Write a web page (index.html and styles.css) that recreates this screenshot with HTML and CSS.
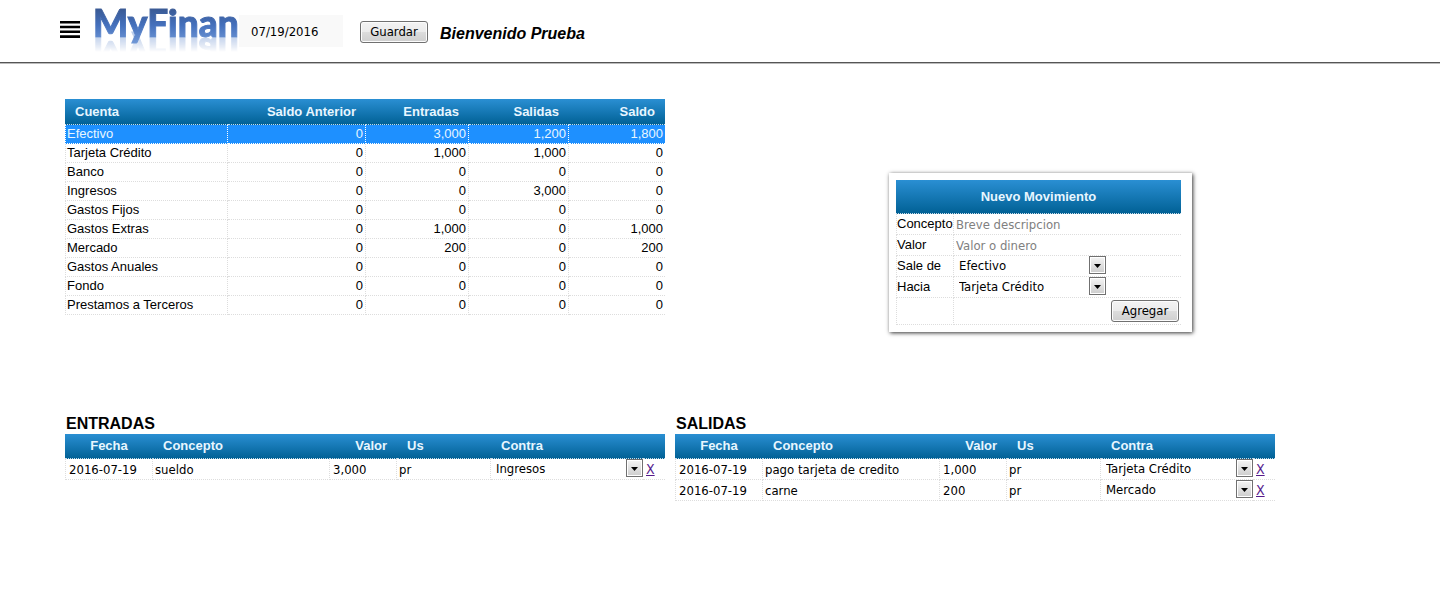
FILE: index.html
```html
<!DOCTYPE html>
<html lang="es">
<head>
<meta charset="utf-8">
<title>MyFinan</title>
<link rel="stylesheet" href="styles.css">
</head>
<body>
<header class="topbar">
  <button class="menu" type="button" aria-label="Menú">
    <svg width="20" height="17" viewBox="0 0 20 17" aria-hidden="true"><path d="M0 0h20v2.6H0zM0 4.8h20v2.5H0zM0 9.6h20v2.5H0zM0 14.3h20v2.7H0z"/></svg>
  </button>
  <div class="logo"><span class="logo-text">MyFinan</span></div>
  <input class="today" type="text" value="07/19/2016" aria-label="Fecha">
  <button class="btn save" type="button">Guardar</button>
  <strong class="welcome">Bienvenido Prueba</strong>
</header>
<main class="content">
  <section class="overview">
    <table class="grid accounts">
      <colgroup><col class="c-name"><col class="c-prev"><col class="c-in"><col class="c-out"><col class="c-total"></colgroup>
      <thead><tr><th>Cuenta</th><th>Saldo Anterior</th><th>Entradas</th><th>Salidas</th><th>Saldo</th></tr></thead>
      <tbody>
        <tr class="selected"><td>Efectivo</td><td>0</td><td>3,000</td><td>1,200</td><td>1,800</td></tr>
        <tr><td>Tarjeta Crédito</td><td>0</td><td>1,000</td><td>1,000</td><td>0</td></tr>
        <tr><td>Banco</td><td>0</td><td>0</td><td>0</td><td>0</td></tr>
        <tr><td>Ingresos</td><td>0</td><td>0</td><td>3,000</td><td>0</td></tr>
        <tr><td>Gastos Fijos</td><td>0</td><td>0</td><td>0</td><td>0</td></tr>
        <tr><td>Gastos Extras</td><td>0</td><td>1,000</td><td>0</td><td>1,000</td></tr>
        <tr><td>Mercado</td><td>0</td><td>200</td><td>0</td><td>200</td></tr>
        <tr><td>Gastos Anuales</td><td>0</td><td>0</td><td>0</td><td>0</td></tr>
        <tr><td>Fondo</td><td>0</td><td>0</td><td>0</td><td>0</td></tr>
        <tr><td>Prestamos a Terceros</td><td>0</td><td>0</td><td>0</td><td>0</td></tr>
      </tbody>
    </table>
    <form class="card">
      <table class="grid entry">
        <colgroup><col class="c-label"><col></colgroup>
        <thead><tr><th colspan="2">Nuevo Movimiento</th></tr></thead>
        <tbody>
          <tr><td><label for="concepto">Concepto</label></td><td><input id="concepto" type="text" placeholder="Breve descripcion"></td></tr>
          <tr><td><label for="valor">Valor</label></td><td><input id="valor" type="text" placeholder="Valor o dinero"></td></tr>
          <tr><td><label for="sale">Sale de</label></td><td><select id="sale"><option>Efectivo</option></select></td></tr>
          <tr><td><label for="hacia">Hacia</label></td><td><select id="hacia"><option>Tarjeta Crédito</option></select></td></tr>
          <tr class="actions"><td></td><td><button class="btn" type="button">Agregar</button></td></tr>
        </tbody>
      </table>
    </form>
  </section>
  <section class="ledgers">
    <div>
      <h2 class="title">ENTRADAS</h2>
      <table class="grid moves">
        <colgroup><col class="c-date"><col><col class="c-value"><col class="c-user"><col class="c-contra"><col class="c-del"></colgroup>
        <thead><tr><th>Fecha</th><th>Concepto</th><th>Valor</th><th>Us</th><th>Contra</th><th></th></tr></thead>
        <tbody>
          <tr><td><input type="text" value="2016-07-19" aria-label="Fecha"></td><td><input type="text" value="sueldo" aria-label="Concepto"></td><td><input type="text" value="3,000" aria-label="Valor"></td><td><input type="text" value="pr" aria-label="Us"></td><td><select aria-label="Contra"><option>Ingresos</option></select></td><td><a class="remove" href="#">X</a></td></tr>
        </tbody>
      </table>
    </div>
    <div>
      <h2 class="title">SALIDAS</h2>
      <table class="grid moves">
        <colgroup><col class="c-date"><col><col class="c-value"><col class="c-user"><col class="c-contra"><col class="c-del"></colgroup>
        <thead><tr><th>Fecha</th><th>Concepto</th><th>Valor</th><th>Us</th><th>Contra</th><th></th></tr></thead>
        <tbody>
          <tr><td><input type="text" value="2016-07-19" aria-label="Fecha"></td><td><input type="text" value="pago tarjeta de credito" aria-label="Concepto"></td><td><input type="text" value="1,000" aria-label="Valor"></td><td><input type="text" value="pr" aria-label="Us"></td><td><select aria-label="Contra"><option>Tarjeta Crédito</option></select></td><td><a class="remove" href="#">X</a></td></tr>
          <tr><td><input type="text" value="2016-07-19" aria-label="Fecha"></td><td><input type="text" value="carne" aria-label="Concepto"></td><td><input type="text" value="200" aria-label="Valor"></td><td><input type="text" value="pr" aria-label="Us"></td><td><select aria-label="Contra"><option>Mercado</option></select></td><td><a class="remove" href="#">X</a></td></tr>
        </tbody>
      </table>
    </div>
  </section>
</main>
</body>
</html>
```
FILE: styles.css
```css
* { box-sizing: border-box; }

body {
  margin: 0;
  background: #fff;
  color: #000;
  font: 13px/16px "Liberation Sans", Arial, sans-serif;
}

input, select, .btn {
  font: 13px/16px "DejaVu Sans Condensed", Tahoma, sans-serif;
  color: #000;
}

/* Top bar */
.topbar {
  display: flex;
  align-items: center;
  height: 63px;
  margin-bottom: 1px;
  padding-left: 60px;
  border-bottom: 1px solid #555;
  box-shadow: 0 1px 0 #bbb;
}

.menu {
  padding: 0;
  border: 0;
  background: none;
  line-height: 0;
  margin-bottom: 4px;
}

.logo {
  width: 147px;
  height: 52px;
  margin: 0 0 8px 12px;
  padding-left: 1px;
  overflow: hidden;
}

.logo-text {
  display: block;
  width: max-content;
  font: 900 37px/44px Lato, Calibri, sans-serif;
  color: transparent;
  -webkit-text-stroke: 1px transparent;
  background: linear-gradient(#3a5a94 8px, #4470bc 24px, #6f97d6 42px);
  background-clip: text;
  -webkit-background-clip: text;
  -webkit-box-reflect: below -15px linear-gradient(transparent 50%, rgba(0, 0, 0, .55));
}

.today {
  width: 104px;
  height: 32px;
  padding: 0 12px;
  border: 0;
  background: #f9f9f9;
}

.btn {
  width: 68px;
  height: 22px;
  padding: 0;
  border: 1px solid #707070;
  border-radius: 3px;
  background: linear-gradient(#f3f3f3, #ebebeb 50%, #dddddd 50%, #cfcfcf);
  box-shadow: inset 0 0 0 1px #fcfcfc;
}

.save { margin: 2px 0 0 17px; }

.welcome {
  margin: 6px 0 0 12px;
  font-size: 16px;
  font-style: italic;
}

/* Page body */
.content {
  max-width: 1275px;
  padding: 35px 0 0 65px;
}

.overview {
  display: flex;
  align-items: flex-start;
  justify-content: space-between;
  padding-right: 83px;
}

.grid {
  width: 100%;
  table-layout: fixed;
  border-collapse: separate;
  border-spacing: 0;
}

.grid thead tr { background: linear-gradient(#2a8fd3, #006094); }

.grid th {
  height: 25px;
  padding: 0 10px;
  border-bottom: 1px dotted #c8dce8;
  color: #e8f6ff;
  font-size: 13px;
  text-align: left;
}

.grid td {
  height: 21px;
  padding: 0;
  border-right: 1px dotted #ddd;
  border-bottom: 1px dotted #ddd;
}

.grid td:first-child { border-left: 1px dotted #ddd; }
.grid td:last-child { border-right: 0; }

/* Accounts */
.accounts { width: 600px; }
.accounts th { height: 26px; }
.accounts td { height: 19px; padding: 0 2px 0 1px; }
.accounts th:not(:first-child), .accounts td:not(:first-child) { text-align: right; }
.accounts .selected td { background: #1e90ff; color: #e8f6ff; border-color: #fff; }
.c-prev { width: 138px; }
.c-in { width: 103px; }
.c-out { width: 100px; }
.c-total { width: 96px; }

/* New movement form */
.card {
  width: 303px;
  margin-top: 74px;
  padding: 7px 11px 7px 7px;
  background: #fff;
  box-shadow: 1px 1px 4px #333;
}

.entry { width: 285px; }
.entry th { height: 34px; text-align: center; }
.c-label { width: 58px; }
.entry .actions td { height: 27px; padding-right: 2px; text-align: right; }

.grid input, .grid select {
  display: block;
  width: 100%;
  height: 20px;
  padding: 0 2px;
  border: 0;
  background: transparent;
}

.grid input::placeholder { color: #808080; opacity: 1; }

.grid select {
  padding: 0 18px 0 5px;
  border-radius: 0;
  appearance: none;
  background: url("data:image/svg+xml,%3Csvg xmlns='http://www.w3.org/2000/svg' width='17' height='18'%3E%3Cdefs%3E%3ClinearGradient id='g' x2='0' y2='1'%3E%3Cstop stop-color='%23f2f2f2'/%3E%3Cstop offset='1' stop-color='%23cfcfcf'/%3E%3C/linearGradient%3E%3C/defs%3E%3Crect x='.5' y='.5' width='16' height='17' fill='%23fff' stroke='%23707070'/%3E%3Crect x='2' y='2' width='13' height='14' fill='url(%23g)'/%3E%3Cpath d='M5 8h7l-3.5 4z'/%3E%3C/svg%3E") no-repeat right top;
}

.entry select { width: 152px; }

/* Entries and withdrawals */
.ledgers {
  display: grid;
  grid-template-columns: 1fr 1fr;
  gap: 10px;
  margin-top: 82px;
}

.title {
  margin: 0;
  padding-left: 1px;
  font-size: 16px;
  line-height: 20px;
}

.moves th:first-child { text-align: center; }
.moves th:nth-child(3) { text-align: right; }
.moves td:first-child input, .moves td:nth-child(3) input { padding-left: 3px; }
.c-date { width: 88px; }
.c-value { width: 67px; }
.c-user { width: 94px; }
.c-contra { width: 152px; }
.c-del { width: 22px; }

.moves td:nth-child(5) { border-right: 0; }

.remove {
  padding-left: 3px;
  color: #551a8b;
  font: 14px/16px "DejaVu Sans Condensed", Tahoma, sans-serif;
}
```
